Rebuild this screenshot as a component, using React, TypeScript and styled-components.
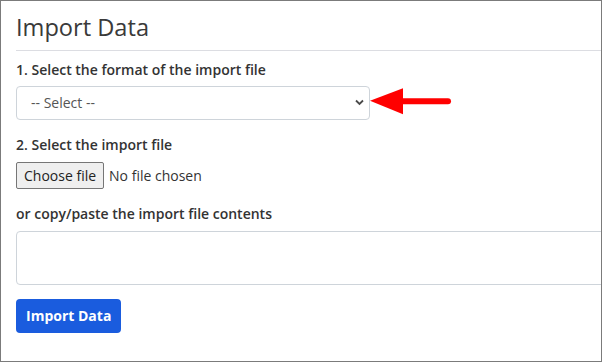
import { FC } from "react"
import styled, { createGlobalStyle } from "styled-components"

const GlobalStyle = createGlobalStyle`
  html, body {
    margin: 0;
    padding: 0;
    background: #ffffff;
  }
  * {
    box-sizing: border-box;
  }
`

const Frame = styled.div`
  width: 602px;
  height: 362px;
  border: 1px solid #7b7b7b;
  padding-left: 15px;
  overflow: hidden;
  background: #ffffff;
  font-family: "Open Sans", "Liberation Sans", sans-serif;
  color: #333333;
`

const Title = styled.h2`
  margin: 12px 0 8px;
  font-size: 23.6px;
  font-weight: 400;
  line-height: 28.8px;
  color: #3a3a3a;
`

const Divider = styled.hr`
  margin: 0;
  border: none;
  border-top: 1px solid #dcdde2;
  height: 0;
`

const Label = styled.div<{ top: number }>`
  margin-top: ${props => props.top}px;
  font-size: 14px;
  font-weight: 600;
  line-height: 21px;
  color: #333333;
`

const SelectRow = styled.div`
  position: relative;
  margin-top: 6px;
  width: 354px;
  height: 34px;
`

const StyledSelect = styled.select`
  appearance: none;
  width: 100%;
  height: 100%;
  padding: 0 36px 0 14px;
  border: 1px solid #ced4da;
  border-radius: 4px;
  background: #ffffff;
  font-family: inherit;
  font-size: 14px;
  color: #555555;
  outline: none;
`

const Chevron = styled.svg`
  position: absolute;
  right: 6px;
  top: 13px;
  pointer-events: none;
`

const Pointer = styled.svg`
  position: absolute;
  left: 354px;
  top: 0;
`

const FileRow = styled.div`
  margin-top: 7px;
  display: flex;
  align-items: center;
  gap: 5px;
  height: 27px;
`

const FileButton = styled.button`
  height: 27px;
  padding: 0 7px;
  border: 1px solid #767676;
  border-radius: 2px;
  background: #efefef;
  font-family: inherit;
  font-size: 14px;
  color: #222222;
`

const FileStatus = styled.span`
  font-size: 14px;
  color: #333333;
`

const PasteArea = styled.textarea`
  display: block;
  margin-top: 7px;
  width: calc(100% + 20px);
  height: 54px;
  border: 1px solid #ced4da;
  border-radius: 4px;
  resize: none;
  font-family: inherit;
  outline: none;
`

const SubmitButton = styled.button`
  margin-top: 14px;
  height: 34px;
  padding: 0 10px;
  border: none;
  border-radius: 4px;
  background: #1a5cde;
  color: #ffffff;
  font-family: inherit;
  font-size: 14px;
  font-weight: 700;
`

const App: FC = () => {
  return (
    <>
      <GlobalStyle />
      <Frame>
        <Title>Import Data</Title>
        <Divider />
        <Label top={8}>1. Select the format of the import file</Label>
        <SelectRow>
          <StyledSelect defaultValue="">
            <option value="">-- Select --</option>
          </StyledSelect>
          <Chevron width="9" height="7" viewBox="0 0 9 7">
            <path d="M1 1.5l3.5 3.5 3.5-3.5" fill="none" stroke="#4a4a4a" strokeWidth="1.8" />
          </Chevron>
          <Pointer width="90" height="34" viewBox="0 0 90 34">
            <polygon points="0,14.7 33,2.3 33,28.3" fill="#ff0000" />
            <line x1="30" y1="15.2" x2="78" y2="15.2" stroke="#ff0000" strokeWidth="6" strokeLinecap="round" />
          </Pointer>
        </SelectRow>
        <Label top={14}>2. Select the import file</Label>
        <FileRow>
          <FileButton type="button">Choose file</FileButton>
          <FileStatus>No file chosen</FileStatus>
        </FileRow>
        <Label top={14}>or copy/paste the import file contents</Label>
        <PasteArea />
        <SubmitButton type="button">Import Data</SubmitButton>
      </Frame>
    </>
  )
}

export default App
